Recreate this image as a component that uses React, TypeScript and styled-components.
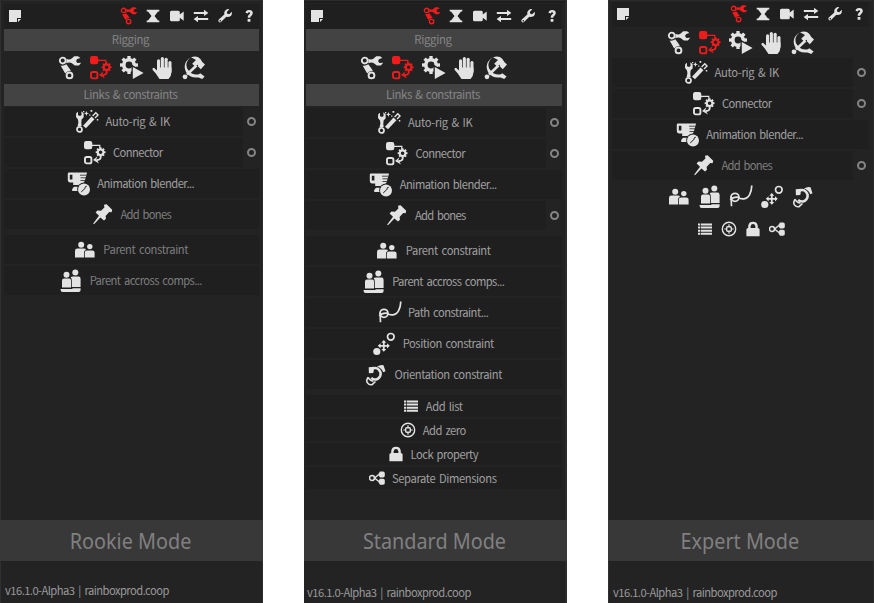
import React from 'react';
import styled, { createGlobalStyle, css } from 'styled-components';

const Global = createGlobalStyle`
  * { box-sizing: border-box; }
  body { margin: 0; background: #fff; overflow: hidden; }
`;

const Page = styled.main`
  display: grid;
  grid-template-columns: 263px 263px 266px;
  column-gap: 41px;
  width: 874px;
  height: 603px;
  font-family: 'Noto Sans CJK SC', 'Noto Sans', sans-serif;
  font-size: 11.2px;
  color: #a0a0a0;
`;

const Panel = styled.section<{ $edge: 'left' | 'right' }>`
  display: flex;
  flex-direction: column;
  height: 603px;
  background: #232323;
  border-top: 1px solid #2b2b2b;
  ${p => p.$edge === 'left'
    ? css`box-shadow: inset 1px 0 #303030, inset -1px 0 #2b2b2b;`
    : css`box-shadow: inset -2px 0 #2b2b2b, inset 0 2px #1e1e1e;`}
`;

const Body = styled.div<{ $pad: string }>`
  flex: 1;
  padding: ${p => p.$pad};
`;

const Header = styled.header<{ $h: number }>`
  display: flex;
  align-items: center;
  height: ${p => p.$h}px;
  padding: 0 0 2px 3px;
  background: #1f1f1f;
`;

const Tabs = styled.nav`
  display: flex;
  margin-left: auto;
  margin-right: -1.5px;
`;

const Tab = styled.span`
  display: grid;
  place-items: center;
  width: 24px;
  height: 22px;
`;

const Title = styled.h2<{ $ls: number }>`
  height: 22px;
  margin: 0;
  padding-right: 2px;
  background: #434343;
  color: #858585;
  font-size: 11.4px;
  font-weight: 400;
  line-height: 20px;
  letter-spacing: ${p => p.$ls}px;
  word-spacing: 1.2px;
  text-align: center;
`;

const Tools = styled.div<{ $h: number; $gap: number }>`
  display: flex;
  justify-content: center;
  align-items: center;
  gap: ${p => p.$gap}px;
  height: ${p => p.$h}px;
`;

const Row = styled.div<{ $h?: number; $mt?: number }>`
  display: flex;
  height: ${p => p.$h ?? 29}px;
  margin-top: ${p => p.$mt ?? 2}px;
`;

const Button = styled.button<{ $dim?: boolean }>`
  display: flex;
  flex: 1;
  align-items: center;
  justify-content: center;
  gap: 6.5px;
  padding: 0 2px 0 0;
  border: 0;
  background: #1f1f1f;
  color: ${p => (p.$dim ? '#7e7e7e' : '#a0a0a0')};
  font: inherit;
`;

const Label = styled.span<{ $ls: number }>`
  padding-bottom: 1px;
  line-height: 18px;
  white-space: nowrap;
  letter-spacing: ${p => p.$ls}px;
  word-spacing: 1.5px;
`;

const Option = styled.span`
  display: grid;
  place-items: center;
  width: 16px;
  padding-left: 1px;
`;

const Ring = styled.i`
  width: 9px;
  height: 9px;
  border: 2px solid #858585;
  border-radius: 50%;
`;

const Mode = styled.div`
  height: 41px;
  background: #383838;
  color: #808080;
  font-family: 'Noto Sans', sans-serif;
  font-size: 22px;
  line-height: 41px;
  text-align: center;
  padding-right: 2px;
`;

const ModeName = styled.span`
  display: inline-block;
  transform: scaleX(0.9);
`;

const Version = styled.footer<{ $top: number; $left: number }>`
  height: 42px;
  padding: ${p => p.$top}px 0 0 ${p => p.$left}px;
  color: #999;
  line-height: 18px;
  letter-spacing: -0.54px;
  word-spacing: 1.8px;
  white-space: nowrap;
`;

const Svg = styled.svg<{ $red?: boolean }>`
  display: block;
  flex: none;
  color: ${p => (p.$red ? '#ee1c1c' : '#e3e3e3')};
  fill: currentColor;
`;

const line = (w: number) => ({ fill: 'none', stroke: 'currentColor', strokeWidth: w });
const teeth = (cx: number, cy: number, r: number, w: number, h: number) =>
  [0, 45, 90, 135, 180, 225, 270, 315].map(a => (
    <rect key={a} x={cx - w / 2} y={cy - r} width={w} height={h} transform={`rotate(${a} ${cx} ${cy})`} />
  ));

const art: Record<string, React.ReactNode> = {
  rig: (
    <>
      <circle cx="4.7" cy="4.6" r="2.9" {...line(1.8)} />
      <path d="M8.4 2.8Q11.5 4.2 14 2.2L16.2 0.3 20 0.2 22.4 1.9 19.2 2.9 18 4.9 19.4 6.9 23.2 6.8 20.9 9.6 16.8 9.5 13.9 7.3Q11.5 5.7 8.4 7.2Z" />
      <path d="M2.6 9.4Q5.4 10.2 8.3 8.2L13 14.8Q9.7 14.4 7.2 17.4Z" />
      <circle cx="11.5" cy="19.4" r="2.9" {...line(1.9)} />
    </>
  ),
  connector: (
    <>
      <rect x="1" y="0" width="8.3" height="8.2" rx="2.2" />
      <path d="M9 4.3H16.8V8" {...line(1.2)} />
      <circle cx="17.6" cy="11.2" r="2.8" {...line(2)} />
      {teeth(17.6, 11.2, 4.9, 1.9, 2)}
      <path d="M17.8 15.5Q17.8 19 14 19" {...line(1.8)} />
      <path d="M10 19 14.5 15.2 13.4 18 16 22.6Z" />
      <rect x="2" y="16" width="6.4" height="6.4" rx="1.7" {...line(1.9)} />
    </>
  ),
  gearplay: (
    <>
      <circle cx="9" cy="9" r="5.2" {...line(3.6)} />
      {teeth(9, 9, 9, 3.3, 3)}
      <path d="M11.5 8.5V24.5L25 17Z" fill="#232323" />
      <path d="M12.8 11V23L23.6 17Z" />
    </>
  ),
  hand: (
    <>
      <rect x="6" y="3.2" width="3.1" height="13" rx="1.5" />
      <rect x="9.8" y="1" width="3.1" height="15" rx="1.5" />
      <rect x="13.6" y="1.8" width="3.1" height="14" rx="1.5" />
      <rect x="17.4" y="5" width="3.1" height="12" rx="1.5" />
      <path d="M6 11.5H20.5V16Q20.5 20 17.5 23H8.5Q6.8 20.5 4.8 17.5L1.5 13.7Q1 12 3 11.8L6 14.4Z" />
    </>
  ),
  hammer: (
    <>
      <path d="M8.8 1Q1.5 7.5 6.2 14 10.5 19.8 17 18.2L18.2 17.2 22.6 20.6 20.2 23 16.6 21.4Q8 22.6 4 16-0.2 7.5 8.8 1Z" />
      <path d="M5 18.5 14.5 9.5" {...line(2.6)} />
      <circle cx="3" cy="20.8" r="2.4" />
      <path d="M9 1.3Q15-0.8 18.4 3L20.3 6 23 8.6 18.8 13.2 15.8 10.2 16 8.7 12.6 10 10.2 7.8 14 4Z" />
    </>
  ),
  auto: (
    <>
      <path d="M1.2 3.2 3 1.8V5.2L5.2 6.1 6.6 4.8 6.3 1.3 8.6 3.3 8.7 7.2 6.6 9.4 6.3 13 6.7 16H2.6L3.4 12.5 3 9.4 1 7Z" />
      <circle cx="4.5" cy="19.4" r="2.5" {...line(1.7)} />
      <path d="M9.5 17 18 7.8" {...line(4)} />
      <path d="M17.6 6 20.8 2.8 23 5 20 8" {...line(1.4)} />
      <path d="M11.4 1 12.1 2.7 14 3.4 12.1 4.1 11.4 6 10.7 4.1 9 3.4 10.7 2.7ZM15.5 0h1.8v1.8h-1.8ZM8 1h1.3v1.3H8ZM21.8 9h1.5V10.5h-1.5ZM14.2 4.6h1.2v1.2h-1.2Z" />
    </>
  ),
  blender: (
    <>
      <path fillRule="evenodd" d="M1.5.5H20L17.8 8.8 15.5 13H6.2V10.6H3.2Q.8 10.6.8 7.6V1.5ZM2.8 2.8V7.6H5.4V2.8Z" />
      <path d="M13 3.2H19M13.5 5.8H19M13.5 8.5H18" stroke="#1f1f1f" strokeWidth="0.8" />
      <path d="M7 14.8H12V19H5.2V17Z" />
      <circle cx="17" cy="17.4" r="6.8" fill="#1f1f1f" />
      <circle cx="17" cy="17.4" r="6" />
      <path d="M14.2 20 18.8 15.6M17.8 15.6Q18 14.4 19.8 14.2" stroke="#1f1f1f" strokeWidth="1" fill="none" />
    </>
  ),
  pin: <path d="M14 1.8 16.6 1.3 22.2 6.8 21.6 9.2 19.2 9 15.6 13 16 15.8 14 17.6 10.4 14.4 4 21.2 3.2 20.6 9 12.8 5.6 9.4 7.4 7.6 11 7.8 14.4 4.4Z" />,
  people: (
    <>
      <circle cx="8.2" cy="6.7" r="3" />
      <circle cx="16.8" cy="8.6" r="2.7" />
      <path d="M2 19.4V13Q2 10.6 4.4 10.6H11Q12.5 10.6 13 12 11 12.2 11 14.4V19.4ZM11.8 19.4V14.8Q11.8 12.4 14 12.4H19.4Q21.6 12.4 21.6 14.6V19.4Z" />
    </>
  ),
  across: (
    <>
      <circle cx="7.5" cy="5.8" r="3" />
      <circle cx="16.3" cy="3.6" r="3" />
      <path d="M3 18.6V11.5Q3 9.6 5 9.6H10.3Q12 9.6 12 11.5V18.6ZM11.6 8.6Q12 7.4 14 7.4H20Q21.6 7.4 21.6 10V18H12.8V11.4Q12.8 9.4 11.6 8.6Z" />
      <path d="M1.6 20H13.4V19.2H21.6V21Q21.6 23 19.6 23H3.6Q1.6 23 1.6 21Z" />
    </>
  ),
  path: (
    <>
      <circle cx="6" cy="12.3" r="4" {...line(1.7)} />
      <path d="M2.5 21.3 2.1 11.5M1.3 15.2Q3.5 12 8.5 12.2C12 14.5 18 15 20.6 9.6Q22.6 6 22.8.5" {...line(1.7)} />
    </>
  ),
  position: (
    <>
      <circle cx="18.8" cy="4.8" r="3.3" {...line(1.7)} />
      <path d="M11.8 8 14.3 10.7H12.7V12.9H15V11.2L17.8 13.8 15 16.4V14.7H12.7V17H14.3L11.8 19.7 9.3 17H10.9V14.7H8.6V16.4L5.8 13.8 8.6 11.2V12.9H10.9V10.7H9.3Z" />
      <circle cx="4.8" cy="19.5" r="3.6" />
    </>
  ),
  orientation: (
    <>
      <path d="M8.5 5.6C13.8 3.7 18 8.2 16.2 13 14.5 17 10 17.5 7.2 14.8" {...line(2.5)} />
      <path d="M4.7 4.2 10 3.7 9.6 8.5 9.2 10 4.9 10.2Z" />
      <path d="M13 3.5Q16.5 1.2 19.5 2.2L21.5 8.2 19.2 9.3Q17.8 5 13 3.5Z" />
      <path d="M4.2 14.2Q1.5 17.8 3.8 20.2 5 22.2 8 21.7L11.5 18.5M4.2 14.2Q4.5 17 9.5 18.2" {...line(1.6)} />
    </>
  ),
};

const smallArt: Record<string, React.ReactNode> = {
  note: <path fillRule="evenodd" d="M2 2H14V10H10V14H2ZM11 11H14L11 14Z" />,
  hourglass: <path d="M1.7 1.7H14.3V3.4H13L9.5 8 13 12.6H14.3V14.3H1.7V12.6H3L6.5 8 3 3.4H1.7Z" />,
  camera: <path d="M2.5 2.8H9.3Q10.8 2.8 10.8 4.3V6.4L14.7 3.4V12.8L10.8 9.8V11.8Q10.8 13.3 9.3 13.3H2.5Q1 13.3 1 11.8V4.3Q1 2.8 2.5 2.8Z" />,
  arrows: <path d="M.8 3.9H11V1.8L15.4 4.9 11 8V5.9H.8ZM15.2 10.1H5V8L.6 11.1 5 14.2V12.1H15.2Z" />,
  wrench: <path fillRule="evenodd" d="M12.3 1.3 9.8 3.9 10.3 5.8 12.2 6.2 14.8 3.7Q15.4 7.4 12.8 8.6 11.1 9.4 9.3 8.7L4 14.1Q2.7 15 1.7 13.8 .8 12.7 1.8 11.6L7.3 6.4Q6.6 3.4 8.8 1.9 10.6.7 12.3 1.3ZM3.2 12.1a.7.7 0 1 0 .1 0Z" />,
  help: <path d="M4.5 4.8Q5 2 8 2 11.8 2 11.8 5.1 11.8 6.8 10.2 7.9 9.2 8.6 9.2 9.7H6.7Q6.5 7.7 8.1 6.5 9.3 5.7 9.2 5 9 4.2 8.1 4.2 7.1 4.2 6.8 5.4ZM6.6 11h2.8v2.8H6.6Z" />,
  list: <path d="M1 2.5h2.3v2H1ZM4 2.5h11v2H4ZM1 5.6h2.3v2H1ZM4 5.6h11v2H4ZM1 8.7h2.3v2H1ZM4 8.7h11v2H4ZM1 11.8h2.3v2H1ZM4 11.8h11v2H4Z" />,
  zero: (
    <>
      <circle cx="8" cy="8" r="6.7" {...line(1.4)} />
      <rect x="5.7" y="5.7" width="4.6" height="4.6" rx="1" {...line(1.4)} />
      <path d="M8 3.3v2M8 10.7v2M3.3 8h2M10.7 8h2" {...line(1.2)} />
    </>
  ),
  lock: <path fillRule="evenodd" d="M3.2 7V5.2Q3.6.8 8 .8T12.8 5.2V7Q14.6 7 14.6 8.6V15.2H1.4V8.6Q1.4 7 3.2 7ZM5.6 7H10.4V5.4Q10 3.1 8 3.1T5.6 5.4Z" />,
  separate: (
    <>
      <circle cx="3" cy="8" r="2.5" {...line(1.5)} />
      <path d="M5.6 8 9.5 4.8M5.6 8 9.5 11.2" {...line(1.4)} />
      <path d="M11 1.5H14Q15.8 1.5 15.8 3.2V5.8Q15.8 7.4 14 7.4H11L9 4.5ZM11 8.8H14Q15.8 8.8 15.8 10.4V13Q15.8 14.7 14 14.7H11L9 11.6Z" />
    </>
  ),
};

const Icon = ({ name, red, size }: { name: string; red?: boolean; size?: number }) => {
  const box = name in art ? 24 : 16;
  const px = size ?? box;
  return (
    <Svg $red={red} width={px} height={px} viewBox={`0 0 ${box} ${box}`} aria-hidden>
      {art[name] ?? smallArt[name]}
    </Svg>
  );
};

type Item = { icon: string; text: string; ls: number; dim?: boolean; opt?: boolean; mt?: number };

const Items = ({ items, h }: { items: Item[]; h?: number }) => (
  <>
    {items.map(it => (
      <Row key={it.text} $h={h} $mt={it.mt}>
        <Button $dim={it.dim}>
          <Icon name={it.icon} />
          <Label $ls={it.ls}>{it.text}</Label>
        </Button>
        {it.opt && <Option><Ring /></Option>}
      </Row>
    ))}
  </>
);

const Top = ({ h }: { h: number }) => (
  <Header $h={h}>
    <Icon name="note" />
    <Tabs>
      <Tab><Icon name="rig" red size={18} /></Tab>
      {['hourglass', 'camera', 'arrows', 'wrench', 'help'].map(n => <Tab key={n}><Icon name={n} /></Tab>)}
    </Tabs>
  </Header>
);

const Toolbar = ({ h }: { h: number }) => (
  <Tools $h={h} $gap={7}>
    {['rig', 'connector', 'gearplay', 'hand', 'hammer'].map(n => <Icon key={n} name={n} red={n === 'connector'} />)}
  </Tools>
);

const Titled = () => (
  <>
    <Top h={25} />
    <Title $ls={-0.35}>Rigging</Title>
    <Toolbar h={33} />
    <Title $ls={-0.43}>Links &amp; constraints</Title>
  </>
);

const base = (first: number, boneDim: boolean, boneOpt: boolean): Item[] => [
  { icon: 'auto', text: 'Auto-rig & IK', ls: -0.28, opt: true, mt: first },
  { icon: 'connector', text: 'Connector', ls: -0.57, opt: true },
  { icon: 'blender', text: 'Animation blender...', ls: -0.52 },
  { icon: 'pin', text: 'Add bones', ls: -0.66, dim: boneDim, opt: boneOpt },
];

const Bottom = ({ mode, top, left }: { mode: string; top: number; left: number }) => (
  <>
    <Mode><ModeName>{mode}</ModeName></Mode>
    <Version $top={top} $left={left}>v16.1.0-Alpha3 | rainboxprod.coop</Version>
  </>
);

export default function App() {
  return (
    <>
      <Global />
      <Page>
        <Panel $edge="left">
          <Body $pad="3px 4px 0">
            <Titled />
            <Items
              items={[
                ...base(1, true, false),
                { icon: 'people', text: 'Parent constraint', ls: -0.36, dim: true, mt: 6 },
                { icon: 'across', text: 'Parent accross comps...', ls: -0.57, dim: true },
              ]}
            />
          </Body>
          <Bottom mode="Rookie Mode" top={20} left={5} />
        </Panel>
        <Panel $edge="right">
          <Body $pad="3px 5px 0 2px">
            <Titled />
            <Items
              items={[
                ...base(2, false, true),
                { icon: 'people', text: 'Parent constraint', ls: -0.36, mt: 6 },
                { icon: 'across', text: 'Parent accross comps...', ls: -0.57 },
                { icon: 'path', text: 'Path constraint...', ls: -0.52 },
                { icon: 'position', text: 'Position constraint', ls: -0.44 },
                { icon: 'orientation', text: 'Orientation constraint', ls: -0.41 },
              ]}
            />
            <Items
              h={22}
              items={[
                { icon: 'list', text: 'Add list', ls: -0.42, mt: 6 },
                { icon: 'zero', text: 'Add zero', ls: -0.5 },
                { icon: 'lock', text: 'Lock property', ls: -0.5 },
                { icon: 'separate', text: 'Separate Dimensions', ls: -0.37 },
              ]}
            />
          </Body>
          <Bottom mode="Standard Mode" top={22} left={3} />
        </Panel>
        <Panel $edge="left">
          <Body $pad="1px 5px 0 4px">
            <Top h={25} />
            <Toolbar h={31} />
            <Items items={base(0, true, true)} />
            <Tools $h={34} $gap={7}>
              {['people', 'across', 'path', 'position', 'orientation'].map(n => <Icon key={n} name={n} />)}
            </Tools>
            <Tools $h={30} $gap={8}>
              {['list', 'zero', 'lock', 'separate'].map(n => <Icon key={n} name={n} />)}
            </Tools>
          </Body>
          <Bottom mode="Expert Mode" top={22} left={5} />
        </Panel>
      </Page>
    </>
  );
}
